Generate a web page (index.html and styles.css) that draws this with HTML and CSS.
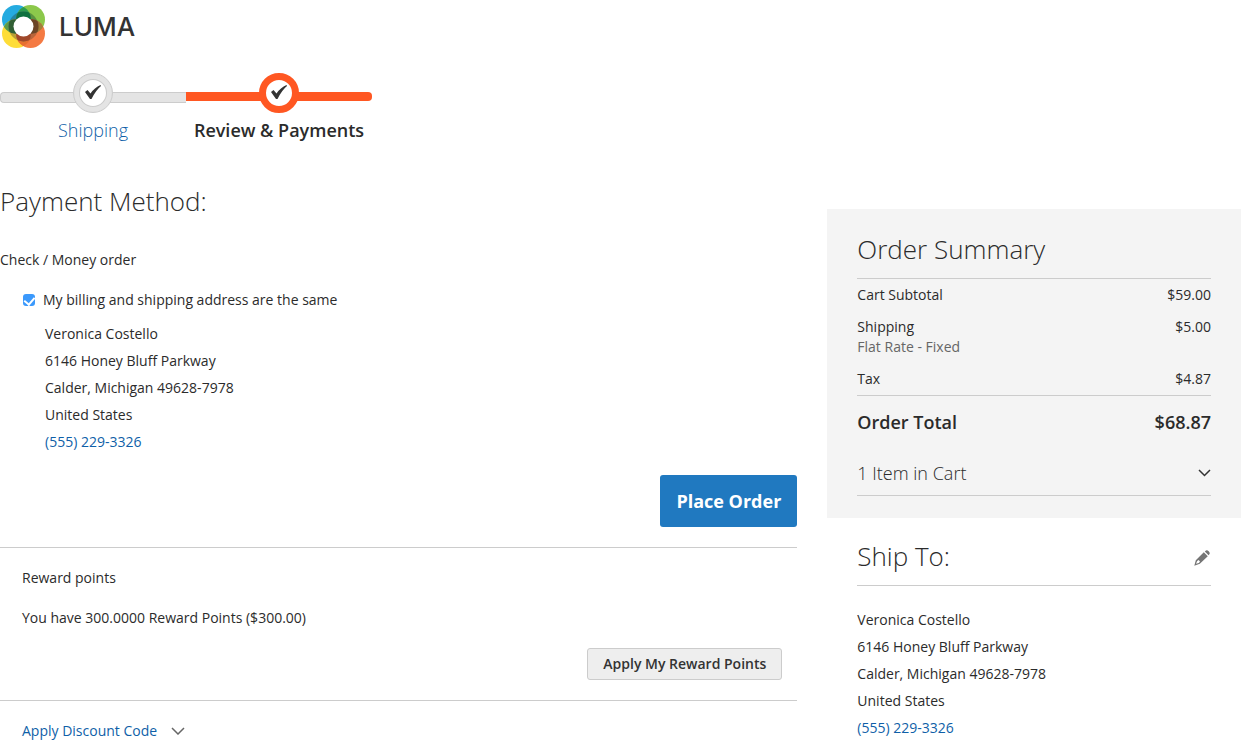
FILE: index.html
```html
<!DOCTYPE html>
<html lang="en">
<head>
<meta charset="UTF-8">
<meta name="viewport" content="width=device-width, initial-scale=1">
<title>Checkout - Review &amp; Payments</title>
<link rel="stylesheet" href="styles.css">
</head>
<body>
<header class="header">
  <a class="logo" href="#" aria-label="Luma home">
    <svg class="logo-mark" viewBox="0 0 43 43" aria-hidden="true">
      <defs>
        <clipPath id="tl"><circle cx="14.5" cy="14.5" r="14.5"/></clipPath>
        <clipPath id="br"><circle cx="28.5" cy="28.5" r="14.5"/></clipPath>
        <clipPath id="ring"><circle cx="21.5" cy="21.5" r="15"/></clipPath>
      </defs>
      <!-- outer circles and where they overlap -->
      <circle cx="14.5" cy="14.5" r="14.5" fill="#25abe0"/>
      <circle cx="28.5" cy="14.5" r="14.5" fill="#8cc84b"/>
      <circle cx="14.5" cy="28.5" r="14.5" fill="#fedd38"/>
      <circle cx="28.5" cy="28.5" r="14.5" fill="#f47a43"/>
      <circle cx="28.5" cy="14.5" r="14.5" fill="#2c9c50" clip-path="url(#tl)"/>
      <circle cx="14.5" cy="28.5" r="14.5" fill="#5b9b4a" clip-path="url(#tl)"/>
      <circle cx="28.5" cy="14.5" r="14.5" fill="#a0803a" clip-path="url(#br)"/>
      <circle cx="14.5" cy="28.5" r="14.5" fill="#e8702f" clip-path="url(#br)"/>
      <!-- the same shapes, darker, inside the ring -->
      <g clip-path="url(#ring)">
        <circle cx="14.5" cy="14.5" r="14.5" fill="#2585a0"/>
        <circle cx="28.5" cy="14.5" r="14.5" fill="#5b9340"/>
        <circle cx="14.5" cy="28.5" r="14.5" fill="#b9a035"/>
        <circle cx="28.5" cy="28.5" r="14.5" fill="#b9653a"/>
        <circle cx="28.5" cy="14.5" r="14.5" fill="#0f7140" clip-path="url(#tl)"/>
        <circle cx="14.5" cy="28.5" r="14.5" fill="#315f35" clip-path="url(#tl)"/>
        <circle cx="28.5" cy="14.5" r="14.5" fill="#6b4526" clip-path="url(#br)"/>
        <circle cx="14.5" cy="28.5" r="14.5" fill="#a0482a" clip-path="url(#br)"/>
      </g>
      <circle cx="21.5" cy="21.5" r="10" fill="#fff"/>
    </svg>
    <span class="logo-text">LUMA</span>
  </a>
</header>

<ol class="progress">
  <li class="step">
    <span class="step-dot">
      <svg viewBox="0 1 18 16" aria-hidden="true"><path d="M1 8 3.5 6 6.5 9.5 Q10.500 3.500 16.500 1 L17 2 Q12 6 7.500 15 L6 15Z"/></svg>
    </span>
    <a class="step-label" href="#">Shipping</a>
  </li>
  <li class="step active" aria-current="step">
    <span class="step-dot">
      <svg viewBox="0 1 18 16" aria-hidden="true"><path d="M1 8 3.5 6 6.5 9.5 Q10.500 3.500 16.500 1 L17 2 Q12 6 7.500 15 L6 15Z"/></svg>
    </span>
    <span class="step-label">Review &amp; Payments</span>
  </li>
</ol>

<div class="checkout">
  <main class="payment">
    <h1 class="title">Payment Method:</h1>
    <p class="method">Check / Money order</p>

    <div class="billing">
      <label class="same-address" for="same">
        <input type="checkbox" id="same" checked>
        My billing and shipping address are the same
      </label>
      <address class="address">
        Veronica Costello<br>
        6146 Honey Bluff Parkway<br>
        Calder, Michigan 49628-7978<br>
        United States<br>
        <a href="tel:5552293326">(555) 229-3326</a>
      </address>
    </div>

    <div class="actions">
      <button type="button" class="btn-primary">Place Order</button>
    </div>

    <section class="option">
      <p>Reward points</p>
      <p>You have 300.0000 Reward Points ($300.00)</p>
      <div class="option-actions">
        <button type="button" class="btn">Apply My Reward Points</button>
      </div>
    </section>

    <section class="option">
      <button type="button" class="discount" aria-expanded="false">
        Apply Discount Code
        <svg viewBox="0 0 14 8" aria-hidden="true"><path d="M1 1l6 6 6-6"/></svg>
      </button>
    </section>
  </main>

  <aside class="sidebar">
    <section class="summary">
      <h2 class="title">Order Summary</h2>
      <table class="totals">
        <tbody>
          <tr>
            <th scope="row">Cart Subtotal</th>
            <td>$59.00</td>
          </tr>
          <tr>
            <th scope="row">Shipping<span class="rate">Flat Rate - Fixed</span></th>
            <td>$5.00</td>
          </tr>
          <tr>
            <th scope="row">Tax</th>
            <td>$4.87</td>
          </tr>
        </tbody>
        <tfoot>
          <tr>
            <th scope="row">Order Total</th>
            <td>$68.87</td>
          </tr>
        </tfoot>
      </table>
      <button type="button" class="cart-items" aria-expanded="false">
        1 Item in Cart
        <svg viewBox="0 0 14 8" aria-hidden="true"><path d="M2 1l5.500 5.500 5.500-5.500"/></svg>
      </button>
    </section>

    <section class="ship-to">
      <div class="ship-head">
        <h2 class="title">Ship To:</h2>
        <button type="button" class="edit" aria-label="Edit shipping address">
          <svg viewBox="0 0 16 16" aria-hidden="true">
            <path fill-rule="evenodd" d="M9.800 2.200 13.800 6.200 5.800 13.800 0.300 15.700 1.800 10.200ZM3.200 10.900 2 13.800 4.900 12.900 6 11.500 4.600 9.900Z"/>
            <path d="M10.800 1.400 12 .5Q13.200 -.2 14.700 1.300 16.200 2.800 15.500 4L14.600 5.200Z"/>
          </svg>
        </button>
      </div>
      <address class="address">
        Veronica Costello<br>
        6146 Honey Bluff Parkway<br>
        Calder, Michigan 49628-7978<br>
        United States<br>
        <a href="tel:5552293326">(555) 229-3326</a>
      </address>
    </section>
  </aside>
</div>
</body>
</html>
```
FILE: styles.css
```css
* {
  box-sizing: border-box;
}
body {
  margin: 0;
  padding: 5px 10px 0 0;
  font-family: "Open Sans", "Noto Sans", sans-serif;
  font-size: 14px;
  line-height: 20px;
  color: #2b2b2b;
  background: #fff;
}
p {
  margin: 0;
}
a {
  color: #0f5fa8;
  text-decoration: none;
}
button {
  font-family: inherit;
  cursor: pointer;
}

/* Header */
.header {
  display: flex;
}
.logo {
  display: flex;
  align-items: center;
  gap: 14px;
  padding-left: 2px;
  color: #333;
}
.logo-mark {
  width: 43px;
  height: 43px;
}
.logo-text {
  font-family: Inter, sans-serif;
  font-size: 26px;
  font-weight: 500;
}

/* Progress bar */
.progress {
  display: flex;
  margin: 25px 0 41px;
  padding: 0;
  list-style: none;
}
.step {
  position: relative;
  display: flex;
  flex-direction: column;
  align-items: center;
  gap: 5px;
  width: 186px;
}
.step::before {
  content: "";
  position: absolute;
  top: 19px;
  left: 0;
  right: 0;
  height: 9px;
  background: #e4e4e4;
  border: 1px solid #ccc;
  border-right: 0;
  border-radius: 4px 0 0 4px;
}
.step-dot {
  position: relative;
  display: flex;
  align-items: center;
  justify-content: center;
  width: 40px;
  height: 40px;
  background: #fff;
  border: 1px solid #ccc;
  border-radius: 50%;
  box-shadow: inset 0 0 0 5px #e4e4e4, inset 0 0 0 6px #ccc;
}
.step-dot svg {
  width: 18px;
  height: 16px;
  fill: #333;
}
.step-label {
  font-size: 18px;
  line-height: 24px;
  font-weight: 300;
}
.step.active::before {
  background: #ff5722;
  border: 0;
  border-radius: 0 4px 4px 0;
}
.step.active .step-dot {
  border: 7px solid #ff5722;
  box-shadow: none;
}
.step.active .step-label {
  font-weight: 600;
}

/* Columns */
.checkout {
  display: grid;
  grid-template-columns: 2fr 1fr;
  align-items: start;
}
.payment {
  padding-right: 30px;
}
.title {
  margin: 0;
  font-size: 26px;
  line-height: 36px;
  font-weight: 300;
}
.method {
  margin-top: 31px;
}
.billing {
  margin-top: 20px;
  padding-left: 23px;
}
.same-address {
  display: flex;
  align-items: center;
  gap: 8px;
}
.same-address input {
  appearance: none;
  display: flex;
  align-items: center;
  justify-content: center;
  width: 12px;
  height: 12px;
  margin: 0;
  background: #3b99fc;
  border-radius: 3px;
}
.same-address input:checked::before {
  content: "";
  width: 5px;
  height: 8px;
  margin-bottom: 1px;
  border: solid #fff;
  border-width: 0 2px 2px 0;
  transform: rotate(40deg);
}
.address {
  font-style: normal;
  line-height: 27px;
}
.billing .address {
  margin-top: 10px;
  padding-left: 22px;
}
.actions {
  display: flex;
  justify-content: flex-end;
  margin: 20px 0;
}
.btn-primary {
  padding: 14px 16px;
  font-size: 18px;
  line-height: 24px;
  font-weight: 700;
  color: #fff;
  background: #2079c0;
  border: 0;
  border-radius: 3px;
}
.btn {
  padding: 5px 15px;
  font-size: 14px;
  line-height: 20px;
  font-weight: 600;
  color: #333;
  background: #eee;
  border: 1px solid #ccc;
  border-radius: 3px;
}
.option {
  display: flex;
  flex-direction: column;
  gap: 20px;
  padding: 20px 15px 20px 22px;
  border-top: 1px solid #ccc;
}
.option:last-child {
  padding-bottom: 0;
}
.option-actions {
  display: flex;
  justify-content: flex-end;
}
.discount {
  display: flex;
  align-items: center;
  align-self: flex-start;
  gap: 14px;
  padding: 0;
  font-size: 14px;
  line-height: 20px;
  color: #0f5fa8;
  background: none;
  border: 0;
}
.discount svg,
.cart-items svg {
  width: 14px;
  height: 8px;
  fill: none;
  stroke: #666;
  stroke-width: 1.5;
}

/* Sidebar */
.sidebar {
  margin-top: 26px;
}
.summary {
  padding: 22px 30px;
  background: #f4f4f4;
}
.summary .title {
  padding-bottom: 11px;
  border-bottom: 1px solid #ccc;
}
.totals {
  width: 100%;
  border-collapse: separate;
  border-spacing: 0;
}
.totals th,
.totals td {
  padding: 6px 0;
  font-weight: 400;
  text-align: left;
  vertical-align: top;
}
.totals td {
  text-align: right;
}
.totals .rate {
  display: block;
  color: #666;
}
.totals tfoot th,
.totals tfoot td {
  padding: 13px 0 26px;
  font-size: 18px;
  line-height: 26px;
  font-weight: 600;
  border-top: 1px solid #ccc;
}
.cart-items {
  display: flex;
  align-items: center;
  justify-content: space-between;
  width: 100%;
  padding: 0 0 10px;
  font-size: 18px;
  line-height: 24px;
  font-weight: 300;
  color: #2b2b2b;
  background: none;
  border: 0;
  border-bottom: 1px solid #ccc;
}
.cart-items svg {
  stroke: #333;
}
.ship-to {
  padding: 20px 30px 0;
}
.ship-head {
  display: flex;
  align-items: center;
  justify-content: space-between;
  margin-bottom: 20px;
  padding-bottom: 11px;
  border-bottom: 1px solid #ccc;
}
.edit {
  display: flex;
  padding: 4px 1px 0;
  background: none;
  border: 0;
}
.edit svg {
  width: 16px;
  height: 16px;
  fill: #757575;
}

@media (max-width: 767px) {
  .checkout {
    grid-template-columns: 1fr;
  }
  .payment {
    padding-right: 0;
  }
}
```
